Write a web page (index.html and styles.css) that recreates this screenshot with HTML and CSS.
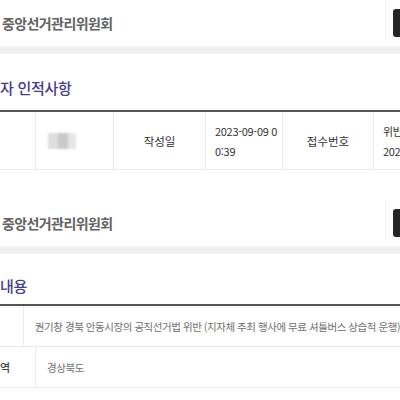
FILE: index.html
```html
<!DOCTYPE html>
<html lang="ko">
<head>
    <meta charset="UTF-8">
    <meta name="viewport" content="width=device-width, initial-scale=1.0">
    <title>중앙선거관리위원회</title>
    <link rel="stylesheet" href="styles.css">
</head>
<body>
    <!-- first capture -->
    <div class="shot shot-top">
        <div class="header">
            <span class="logo-text">중앙선거관리위원회</span>
            <span class="divider"></span>
            <span class="menu-btn"></span>
        </div>
        <div class="band"></div>
        <h2 class="section-title">자 인적사항</h2>
        <div class="info-table">
            <div class="cell"></div>
            <div class="cell"><span class="blurred"></span></div>
            <div class="cell head">작성일</div>
            <div class="cell value">2023-09-09 0<br>0:39</div>
            <div class="cell head">접수번호</div>
            <div class="cell value">위반<br>202</div>
        </div>
    </div>

    <!-- second capture -->
    <div class="shot">
        <div class="header">
            <span class="logo-text">중앙선거관리위원회</span>
            <span class="divider"></span>
            <span class="menu-btn"></span>
        </div>
        <div class="band"></div>
        <h2 class="section-title second">내용</h2>
        <div class="detail-table">
            <div class="row">
                <div class="label"></div>
                <div class="text">권기창 경북 안동시장의 공직선거법 위반 (지자체 주최 행사에 무료 셔틀버스 상습적 운행)</div>
            </div>
            <div class="row">
                <div class="label">역</div>
                <div class="text">경상북도</div>
            </div>
        </div>
    </div>
</body>
</html>
```

FILE: styles.css
```css
body {
    margin: 0;
    background: #fff;
    font-family: "Noto Sans CJK KR", "Noto Sans", sans-serif;
    color: #333;
    width: 400px;
    overflow: hidden;
}
.shot {
    overflow: hidden;
}
.shot-top {
    height: 200px;
}
.header {
    height: 46px;
    display: flex;
    align-items: center;
}
.logo-text {
    font-size: 14px;
    font-weight: 700;
    color: #626262;
    letter-spacing: -0.6px;
    margin-left: 2px;
}
.divider {
    width: 1px;
    height: 40px;
    background: #f2f2f2;
    margin-left: auto;
    align-self: flex-start;
}
.menu-btn {
    width: 10px;
    height: 28px;
    background: #262626;
    border-radius: 3px;
    margin-left: 7px;
    margin-right: -3px;
}
.band {
    height: 8px;
    background: linear-gradient(#f7f7f7, #ececec 40%, #f4f4f4);
}
.section-title {
    margin: 0;
    font-size: 15px;
    font-weight: 500;
    color: #463d88;
    padding: 24px 0 10px;
    line-height: 20px;
    letter-spacing: -0.3px;
}
.section-title.second {
    padding: 22px 0 8px;
}
.info-table {
    display: grid;
    grid-template-columns: 35px 78px 92px 77px 91px 40px;
    border-top: 2px solid #555;
    border-bottom: 1px solid #ebebeb;
    height: 57px;
    margin-top: 2px;
}
.cell {
    border-left: 1px solid #ebebeb;
    display: flex;
    align-items: center;
    font-size: 11.5px;
    color: #333;
    line-height: 20px;
}
.cell:first-child {
    border-left: none;
}
.cell.head {
    justify-content: center;
}
.cell.value {
    padding-left: 9px;
    font-size: 11px;
    white-space: nowrap;
    letter-spacing: -0.3px;
}
.blurred {
    width: 28px;
    height: 16px;
    margin-left: 12px;
    background: linear-gradient(90deg, #d6d6d6 0 35%, #bdbdbd 35% 70%, #e0e0e0 70%);
    filter: blur(1px);
    opacity: 0.8;
}
.detail-table {
    border-top: 2px solid #555;
}
.row {
    display: flex;
    height: 40px;
    border-bottom: 1px solid #ebebeb;
}
.label {
    width: 35px;
    border-right: 1px solid #ebebeb;
    display: flex;
    align-items: center;
    font-size: 11px;
    font-weight: 500;
    color: #444;
}
.text {
    display: flex;
    align-items: center;
    padding-left: 11px;
    font-size: 10.5px;
    color: #707070;
    white-space: nowrap;
    letter-spacing: -0.45px;
}
```
